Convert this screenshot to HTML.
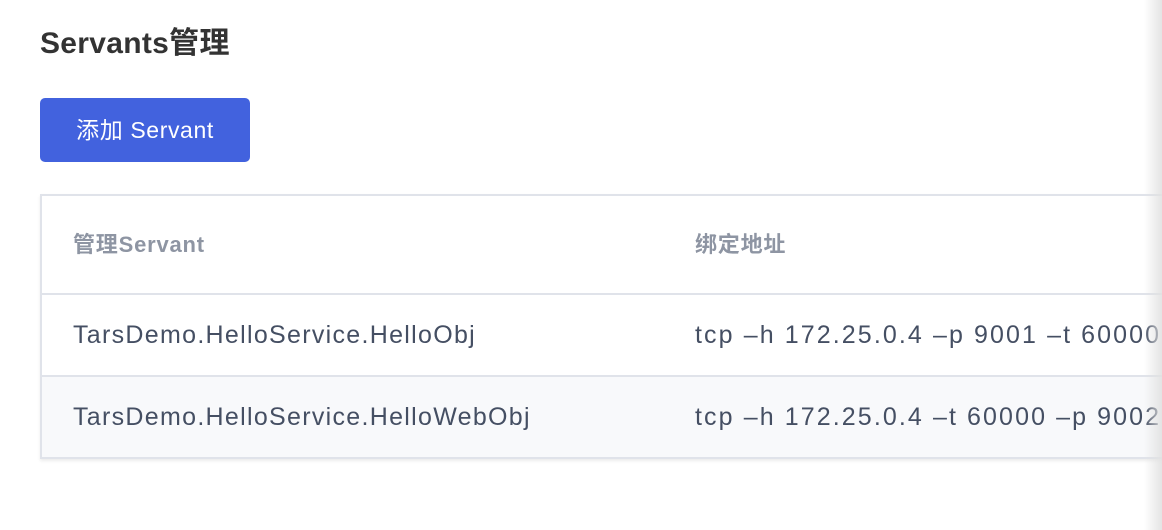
<!DOCTYPE html>
<html><head><meta charset="utf-8"><style>
html,body{margin:0;padding:0;width:1162px;height:530px;overflow:hidden;background:#fff;font-family:"Liberation Sans","Noto Sans CJK SC",sans-serif;}
h1{position:absolute;left:40px;top:24px;margin:0;font-size:30px;font-weight:bold;color:#333;line-height:40px;letter-spacing:0.3px;}
.btn{position:absolute;left:40px;top:98px;width:210px;height:64px;background:#4262de;border-radius:5px;color:#fff;font-size:23px;line-height:64px;text-align:center;letter-spacing:0.6px;}
.tbl{position:absolute;left:40px;top:194px;width:1200px;border:2px solid #e0e3ea;border-right:none;box-shadow:0 2px 3px rgba(0,0,0,.08);}
.row{position:relative;border-bottom:2px solid #e0e3ea;}
.row:last-child{border-bottom:none;}
.row span{position:absolute;top:0;white-space:nowrap;}
.h{height:97px;color:#8e95a3;font-size:22px;font-weight:bold;line-height:97px;letter-spacing:0.8px;}
.d{height:80px;color:#454f63;font-size:25px;line-height:80px;letter-spacing:1.3px;}
.d .c2{letter-spacing:2.1px;}
.alt{background:#f8f9fb;}
.c1{left:31px}.c2{left:653px}
.shade{position:absolute;right:0;top:0;width:18px;height:530px;background:linear-gradient(to right,rgba(230,230,230,0),rgba(225,225,225,.9));}
</style></head><body>
<h1>Servants管理</h1>
<div class="btn">添加 Servant</div>
<div class="tbl">
<div class="row h"><span class="c1">管理Servant</span><span class="c2">绑定地址</span></div>
<div class="row d"><span class="c1">TarsDemo.HelloService.HelloObj</span><span class="c2">tcp –h 172.25.0.4 –p 9001 –t 60000</span></div>
<div class="row d alt"><span class="c1">TarsDemo.HelloService.HelloWebObj</span><span class="c2">tcp –h 172.25.0.4 –t 60000 –p 9002</span></div>
</div>
<div class="shade"></div>
</body></html>
